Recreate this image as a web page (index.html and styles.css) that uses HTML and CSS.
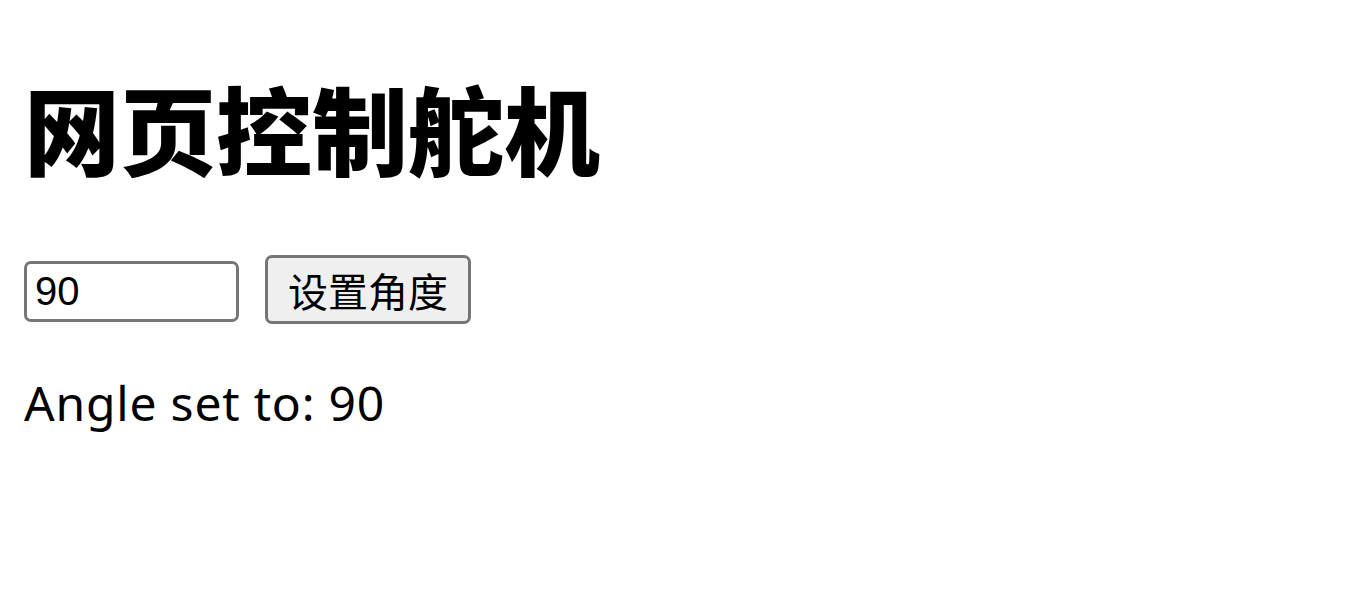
FILE: index.html
```html
<!DOCTYPE html>
<html lang="zh-CN">
<head>
<meta charset="utf-8">
<title>网页控制舵机</title>
<link rel="stylesheet" href="styles.css">
</head>
<body>
<h1 class="title">网页控制舵机</h1>
<div class="controls">
  <input class="angle-input" type="text" value="90">
  <button class="set-btn" type="button">设置角度</button>
</div>
<p class="status">Angle set to: 90</p>
</body>
</html>
```

FILE: styles.css
```css
html, body {
  background: #ffffff;
}
body {
  margin: 24px;
  font-family: "Noto Sans", "Noto Sans CJK SC", sans-serif;
  color: #000;
}
.title {
  font-family: "Noto Sans CJK SC", sans-serif;
  font-weight: 900;
  font-size: 96px;
  line-height: 127px;
  margin: 39px 0 65px;
  letter-spacing: 0;
}
.controls {
  display: flex;
  align-items: flex-start;
  gap: 26px;
  height: 69px;
}
.angle-input {
  box-sizing: border-box;
  width: 215px;
  height: 61px;
  margin-top: 6px;
  border: 3px solid #767676;
  border-radius: 7px;
  padding: 3px 8px;
  font-family: "Liberation Sans", Arial, sans-serif;
  font-size: 40px;
  color: #000;
  background: #fff;
  outline: none;
}
.set-btn {
  box-sizing: border-box;
  width: 206px;
  height: 69px;
  border: 3px solid #767676;
  border-radius: 7px;
  background: #efefef;
  padding: 0 18px;
  font-family: "Noto Sans CJK SC", sans-serif;
  font-size: 40px;
  line-height: 1;
  color: #000;
}
.status {
  margin: 47px 0 0;
  font-size: 48px;
  line-height: 64px;
  letter-spacing: 0.8px;
}
```
